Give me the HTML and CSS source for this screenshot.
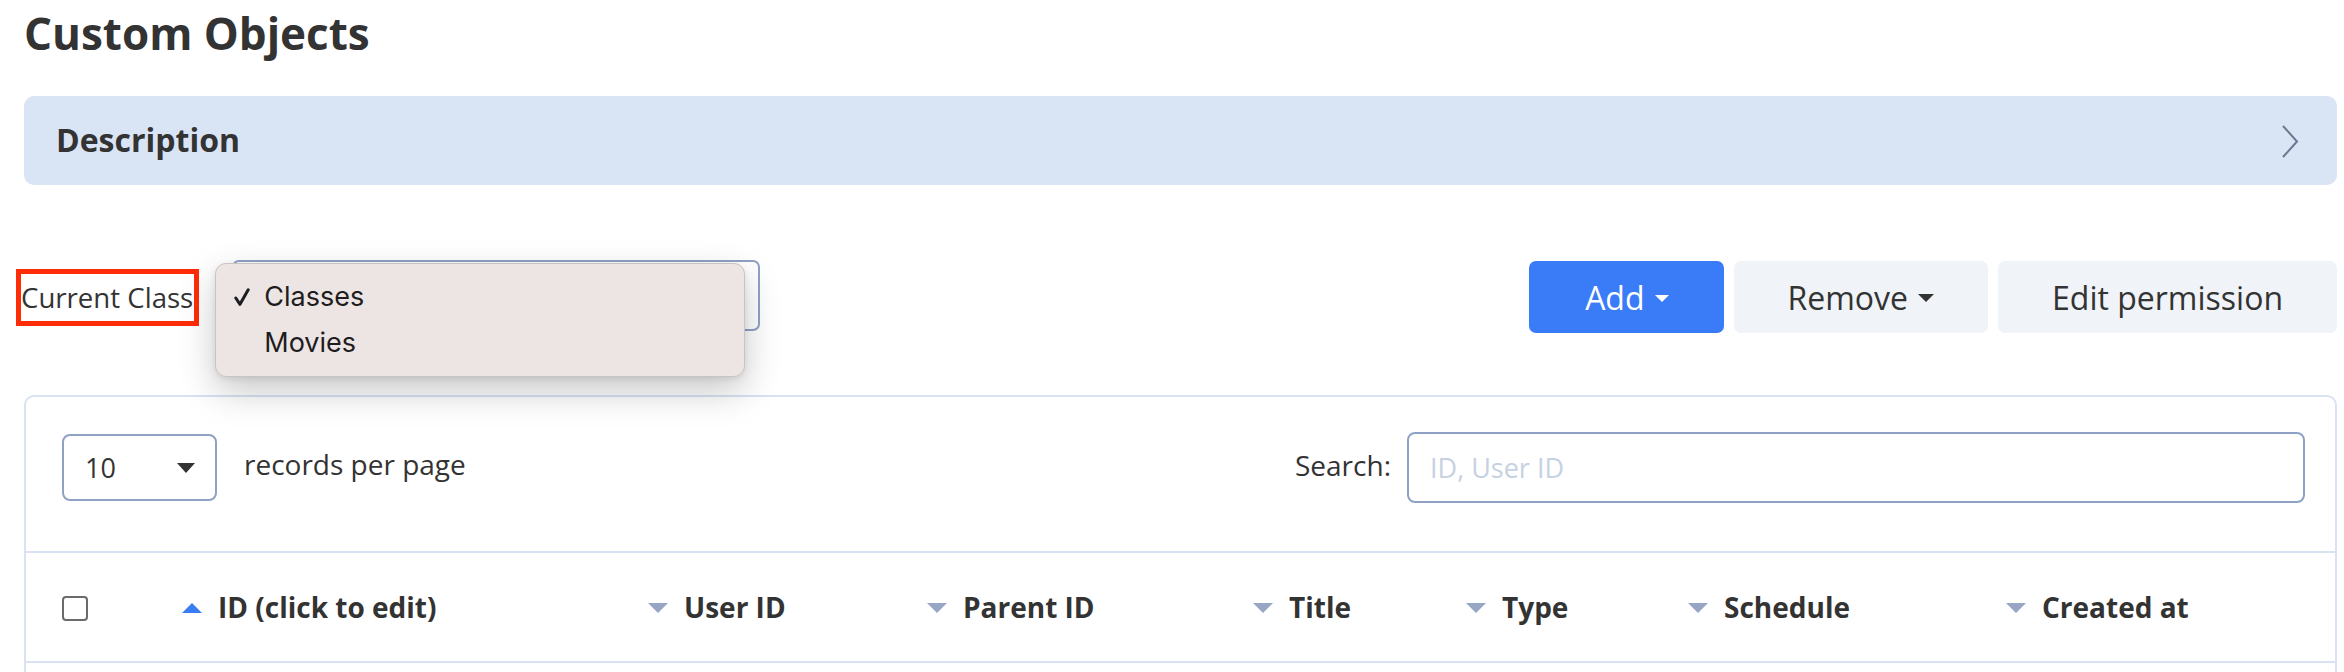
FILE: index.html
```html
<!DOCTYPE html>
<html lang="en">
<head>
<meta charset="utf-8">
<title>Custom Objects</title>
<link rel="stylesheet" href="styles.css">
</head>
<body>
<div class="page">
  <h1 class="title">Custom Objects</h1>

  <div class="desc">
    <span class="desc-label">Description</span>
    <svg class="chev" width="18" height="33" viewBox="0 0 18 33"><polyline points="2,1 16,16.5 2,32" fill="none" stroke="#6b7890" stroke-width="2"/></svg>
  </div>

  <div class="toolbar">
    <div class="class-picker">
      <span class="class-label">Current Class</span>
      <div class="class-select">
        <div class="menu">
          <div class="menu-item"><svg class="check" width="16" height="20" viewBox="0 0 16 20"><polyline points="1.8,11 6,17.3 14.2,2.8" fill="none" stroke="#1d1d1f" stroke-width="3" stroke-linecap="round" stroke-linejoin="round"/></svg><span>Classes</span></div>
          <div class="menu-item"><span class="check-space"></span><span>Movies</span></div>
        </div>
      </div>
    </div>
    <div class="actions">
      <button class="btn btn-primary">Add<svg class="caret" width="14" height="7" viewBox="0 0 14 7"><polygon points="0,0 14,0 7,7" fill="#fff"/></svg></button>
      <button class="btn btn-light">Remove<svg class="caret" width="16" height="8" viewBox="0 0 16 8"><polygon points="0,0 16,0 8,8" fill="#333"/></svg></button>
      <button class="btn btn-light">Edit permission</button>
    </div>
  </div>

  <div class="card">
    <div class="controls">
      <div class="length">
        <div class="length-select"><span>10</span><svg width="18" height="10" viewBox="0 0 18 10"><polygon points="0,0 18,0 9,10" fill="#333"/></svg></div>
        <span class="length-text">records per page</span>
      </div>
      <label class="search">
        <span class="search-label">Search:</span>
        <span class="search-input">ID, User ID</span>
      </label>
    </div>
    <div class="thead">
      <div class="th"><span class="checkbox"></span></div>
      <div class="th"><svg class="sort" width="20" height="10" viewBox="0 0 20 10"><polygon points="0,10 20,10 10,0" fill="#3a7bf6"/></svg>ID (click to edit)</div>
      <div class="th"><svg class="sort" width="20" height="10" viewBox="0 0 20 10"><polygon points="0,0 20,0 10,10" fill="#96a6c4"/></svg>User ID</div>
      <div class="th"><svg class="sort" width="20" height="10" viewBox="0 0 20 10"><polygon points="0,0 20,0 10,10" fill="#96a6c4"/></svg>Parent ID</div>
      <div class="th"><svg class="sort" width="20" height="10" viewBox="0 0 20 10"><polygon points="0,0 20,0 10,10" fill="#96a6c4"/></svg>Title</div>
      <div class="th"><svg class="sort" width="20" height="10" viewBox="0 0 20 10"><polygon points="0,0 20,0 10,10" fill="#96a6c4"/></svg>Type</div>
      <div class="th"><svg class="sort" width="20" height="10" viewBox="0 0 20 10"><polygon points="0,0 20,0 10,10" fill="#96a6c4"/></svg>Schedule</div>
      <div class="th"><svg class="sort" width="20" height="10" viewBox="0 0 20 10"><polygon points="0,0 20,0 10,10" fill="#96a6c4"/></svg>Created at</div>
    </div>
    <div class="tbody"></div>
  </div>
</div>
</body>
</html>
```
FILE: styles.css
```css
* { box-sizing: border-box; }
html, body { margin: 0; padding: 0; background: #fff; }
body {
  font-family: "Open Sans", "Noto Sans", sans-serif;
  color: #333;
  font-size: 28px;
}
.page {
  padding: 0 7px 0 24px;
}
.title {
  margin: 0;
  padding-top: 5px;
  font-size: 44px;
  font-weight: 700;
  line-height: 57px;
  color: #333;
}
.desc {
  margin-top: 34px;
  height: 89px;
  background: #d9e4f5;
  border-radius: 10px;
  display: flex;
  align-items: center;
  justify-content: space-between;
  padding: 0 38px 0 32px;
}
.desc-label {
  font-size: 32px;
  font-weight: 700;
  color: #333;
  margin-top: -2px;
}
.chev { display: block; margin-top: 2px; }

.toolbar {
  margin-top: 75px;
  display: flex;
  align-items: center;
  justify-content: space-between;
  height: 74px;
}
.class-picker {
  display: flex;
  align-items: center;
  gap: 33px;
  margin-left: -8px;
}
.class-label {
  border: 5px solid #ff2c08;
  height: 57px;
  line-height: 46px;
  font-size: 27.6px;
  color: #333;
  white-space: nowrap;
  padding: 0 1px 0 0;
}
.class-select {
  position: relative;
  width: 528px;
  height: 71px;
  border: 2px solid #8fa2c6;
  border-radius: 7px;
  margin-top: -4px;
}
.menu {
  position: absolute;
  left: -19px;
  top: 1px;
  width: 530px;
  padding: 10px 0;
  background: #ede5e3;
  border: 1px solid #c9c3c2;
  border-radius: 11px;
  box-shadow: 0 14px 36px rgba(0, 0, 0, 0.22), 0 2px 6px rgba(0, 0, 0, 0.08);
  font-family: "Inter", "Liberation Sans", sans-serif;
  font-size: 27px;
  color: #1d1d1f;
  z-index: 5;
}
.menu-item {
  height: 46px;
  display: flex;
  align-items: center;
  padding-left: 18px;
}
.check { display: block; margin-right: 14px; }
.check-space { display: inline-block; width: 30px; }

.actions {
  display: flex;
  gap: 10px;
}
.btn {
  height: 72px;
  border: none;
  border-radius: 7px;
  font-family: "Open Sans", "Noto Sans", sans-serif;
  font-size: 32px;
  padding: 0 54px;
  display: flex;
  align-items: center;
  gap: 10px;
}
.btn-primary { background: #3a7bf7; color: #fff; padding: 0 55px 0 56px; }
.btn-light { background: #f0f3f7; color: #333; }
.caret { display: block; margin-top: 2px; }

.card {
  margin-top: 61px;
  border: 2px solid #d8e2f3;
  border-radius: 10px;
  padding-bottom: 80px;
}
.controls {
  display: flex;
  align-items: center;
  justify-content: space-between;
  padding: 35px 30px 48px 36px;
  border-bottom: 2px solid #d8e2f3;
}
.length {
  display: flex;
  align-items: center;
  gap: 27px;
}
.length-select {
  width: 155px;
  height: 67px;
  border: 2px solid #8fa2c6;
  border-radius: 8px;
  display: flex;
  align-items: center;
  justify-content: space-between;
  padding: 0 20px 0 21px;
  font-size: 27px;
  color: #333;
}
.length-text { margin-top: -8px; }
.search {
  display: flex;
  align-items: center;
  gap: 16px;
}
.search-label { margin-top: -6px; }
.search-input {
  width: 898px;
  height: 71px;
  border: 2px solid #8fa2c6;
  border-radius: 8px;
  display: flex;
  align-items: center;
  padding-left: 21px;
  color: #c6d1e2;
  font-size: 27px;
}
.thead {
  display: grid;
  grid-template-columns: 120px 466px 279px 326px 213px 222px 318px 1fr;
  align-items: center;
  height: 110px;
  padding-left: 36px;
  border-bottom: 2px solid #d8e2f3;
}
.th {
  display: flex;
  align-items: center;
  gap: 16px;
  font-size: 28px;
  font-weight: 700;
  color: #333;
  white-space: nowrap;
}
.sort { display: block; margin-top: 2px; }
.checkbox {
  display: block;
  width: 26px;
  height: 25px;
  border: 2px solid #6b6b6b;
  border-radius: 4px;
  margin-top: 2px;
}
.tbody { height: 60px; }
```
